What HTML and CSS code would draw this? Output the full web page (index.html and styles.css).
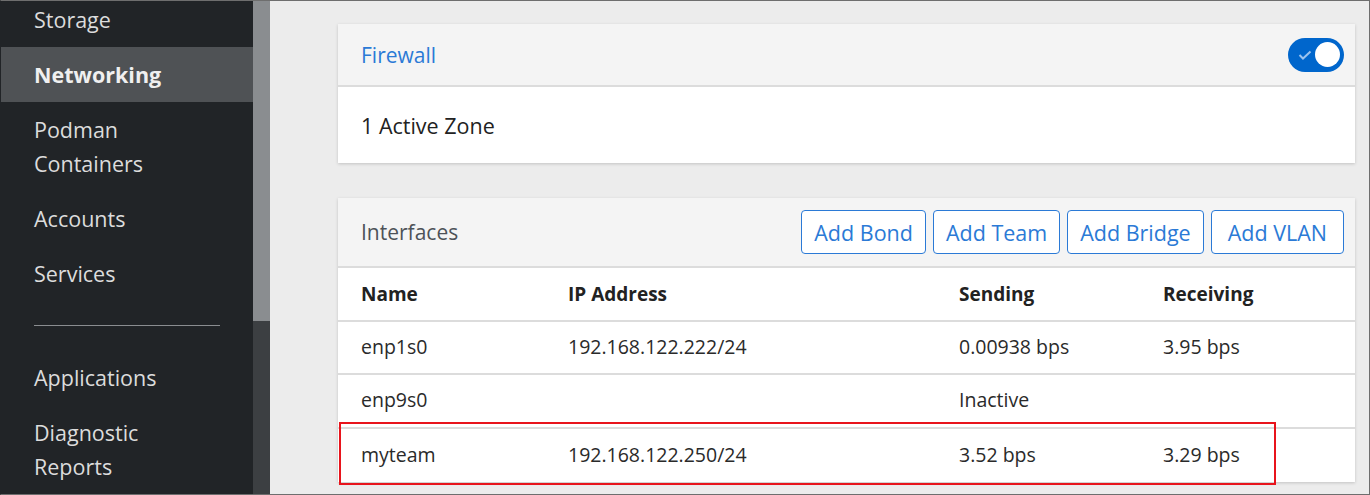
FILE: index.html
```html
<!DOCTYPE html>
<html>
<head>
<meta charset="utf-8">
<link rel="stylesheet" href="styles.css">
</head>
<body>
<div class="frame">
  <nav class="sidebar">
    <ul class="nav">
      <li class="nav-item">Storage</li>
      <li class="nav-item active">Networking</li>
      <li class="nav-item">Podman<br>Containers</li>
      <li class="nav-item">Accounts</li>
      <li class="nav-item">Services</li>
      <li class="nav-divider"><span></span></li>
      <li class="nav-item">Applications</li>
      <li class="nav-item">Diagnostic<br>Reports</li>
    </ul>
  </nav>
  <div class="scrollbar"><div class="thumb"></div></div>
  <main class="main">
    <section class="card">
      <header class="card-head">
        <a class="link">Firewall</a>
        <span class="toggle">
          <svg class="check" width="14" height="10" viewBox="0 0 14 10"><path d="M1.5 5 L5 8.5 L12.5 1.5" fill="none" stroke="#9cc3ee" stroke-width="2"/></svg>
          <span class="knob"></span>
        </span>
      </header>
      <div class="card-body">1 Active Zone</div>
    </section>
    <section class="card">
      <header class="card-head tall">
        <span class="title">Interfaces</span>
        <div class="actions">
          <button class="btn">Add Bond</button>
          <button class="btn">Add Team</button>
          <button class="btn">Add Bridge</button>
          <button class="btn wide">Add VLAN</button>
        </div>
      </header>
      <div class="table">
        <div class="row head">
          <span>Name</span><span>IP Address</span><span>Sending</span><span>Receiving</span>
        </div>
        <div class="row">
          <span>enp1s0</span><span>192.168.122.222/24</span><span>0.00938 bps</span><span>3.95 bps</span>
        </div>
        <div class="row">
          <span>enp9s0</span><span></span><span>Inactive</span><span></span>
        </div>
        <div class="row last">
          <span>myteam</span><span>192.168.122.250/24</span><span>3.52 bps</span><span>3.29 bps</span>
          <div class="highlight"></div>
        </div>
      </div>
    </section>
  </main>
</div>
</body>
</html>
```
FILE: styles.css
```css
* { box-sizing: border-box; }
html, body { margin: 0; padding: 0; }
body {
  font-family: "Open Sans", "Liberation Sans", sans-serif;
  width: 1370px;
  height: 495px;
  overflow: hidden;
}
.frame {
  width: 1370px;
  height: 495px;
  border: 1px solid #6e6e6e;
  border-left-color: #212427;
  display: flex;
  overflow: hidden;
  background: #ececec;
}
.sidebar {
  width: 252px;
  flex: none;
  background: #212427;
  color: #dcdcdc;
  overflow: hidden;
}
.nav {
  list-style: none;
  margin: -9px 0 0 0;
  padding: 0;
}
.nav-item {
  padding: 10.5px 20px 10.5px 33px;
  font-size: 21.5px;
  line-height: 34px;
}
.nav-item.active {
  background: #4f5255;
  color: #f0f0f0;
  font-weight: 700;
}
.nav-divider {
  padding: 24px 34px 24px 33px;
}
.nav-divider span {
  display: block;
  width: 186px;
  height: 1px;
  background: #8a8d90;
}
.scrollbar {
  width: 17px;
  flex: none;
  background: #3c3f42;
}
.thumb {
  height: 320px;
  background: #8a8d90;
}
.main {
  flex: 1;
  padding: 23px 14px 0 68px;
  display: flex;
  flex-direction: column;
  gap: 35px;
}
.card {
  background: #fff;
  box-shadow: 0 1px 3px rgba(0,0,0,0.18);
}
.card-head {
  height: 63px;
  background: #f4f4f4;
  border-bottom: 2px solid #dcdcdc;
  display: flex;
  align-items: center;
  justify-content: space-between;
  padding: 0 11px 0 23px;
}
.card-head.tall {
  height: 70px;
}
.link {
  color: #2b7ad6;
  font-size: 21px;
}
.title {
  color: #4d5258;
  font-size: 21px;
}
.toggle {
  position: relative;
  width: 56px;
  height: 34px;
  border-radius: 17px;
  background: #0066cc;
  display: flex;
  align-items: center;
  justify-content: space-between;
  padding: 0 4px 0 10px;
}
.check { display: block; margin-top: 1px; }
.knob {
  width: 25px;
  height: 25px;
  border-radius: 50%;
  background: #fff;
}
.card-body {
  height: 76px;
  display: flex;
  align-items: center;
  padding: 0 23px;
  font-size: 21.5px;
  color: #222;
}
.actions {
  display: flex;
  gap: 7px;
}
.btn {
  font-family: inherit;
  font-size: 21.5px;
  color: #2b7ad6;
  background: #fff;
  border: 1px solid #2b7ad6;
  border-radius: 4px;
  height: 44px;
  padding: 0 12px;
}
.btn.wide { padding: 0 16px; }
.table { position: relative; }
.row {
  position: relative;
  display: grid;
  grid-template-columns: 207px 391px 204px 1fr;
  align-items: center;
  height: 53.5px;
  padding-left: 23px;
  border-bottom: 2px solid #dcdcdc;
  font-size: 19.5px;
  color: #2a2a2a;
}
.row span { margin-top: -2px; }
.row.head span { margin-top: 0; }
.row.head {
  font-weight: 700;
  font-size: 19px;
  color: #222;
}
.row.last { border-bottom: none; }
.highlight {
  position: absolute;
  left: 1px;
  top: -7px;
  width: 937px;
  height: 63px;
  border: 2px solid #e8141c;
  pointer-events: none;
}
```
